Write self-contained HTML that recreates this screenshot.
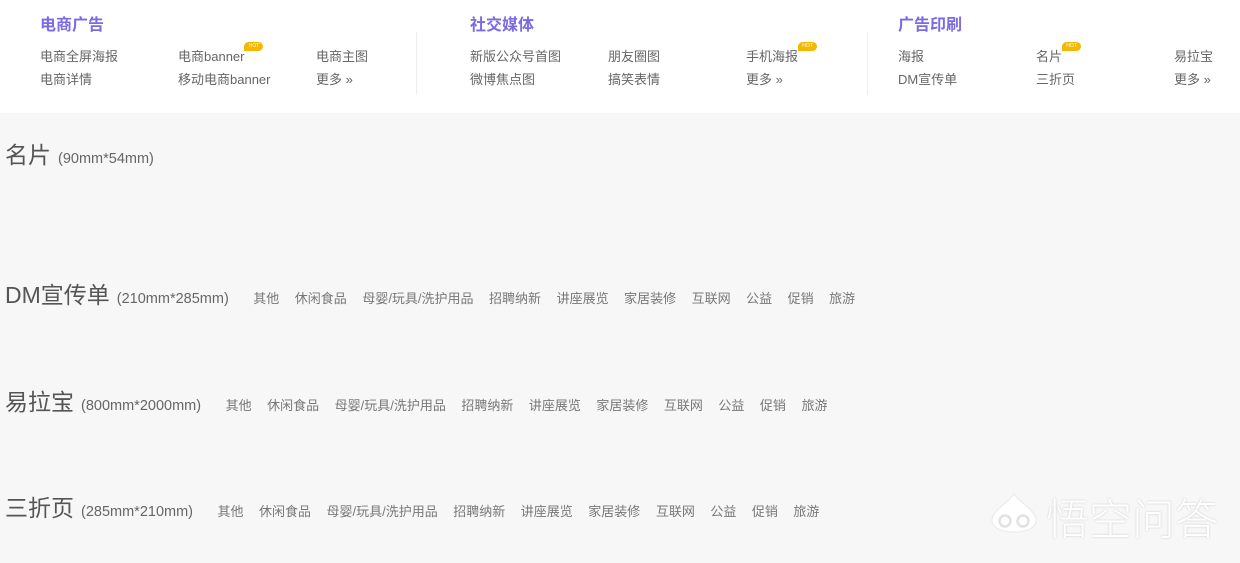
<!DOCTYPE html>
<html><head><meta charset="utf-8"><style>
*{margin:0;padding:0;box-sizing:border-box}
body{width:1240px;height:563px;background:#f7f7f7;font-family:"Liberation Sans","Noto Sans CJK SC",sans-serif;color:#666;position:relative;overflow:hidden}
.hdr{position:absolute;left:0;top:0;width:1240px;height:113px;background:#fff}
.a{position:absolute;white-space:nowrap;font-size:13px;line-height:16px}
.t{position:absolute;font-size:16px;font-weight:bold;color:#7a6be3;line-height:20px}
.div{position:absolute;top:32px;width:1px;height:63px;background:#eee}
.hot{display:inline-block;position:relative;top:-7px;left:0;width:19px;height:9px;border-radius:5px 5px 5px 0;background:#f5b800;color:#fff;font-size:5px;line-height:9px;text-align:center;vertical-align:top}
.row{position:absolute;left:5px;display:flex;align-items:baseline;white-space:nowrap;color:#666}
.row .big{font-size:23px;color:#555}
.row .sz{font-size:14.5px;margin-left:7px;margin-right:9px;color:#666}
.row .tag{font-size:13px;margin-left:15.5px;color:#777}
</style></head><body>
<div class="hdr"></div>
<div class="t" style="left:40px;top:16px">电商广告</div>
<div class="t" style="left:470px;top:16px">社交媒体</div>
<div class="t" style="left:898px;top:16px">广告印刷</div>
<div class="div" style="left:416px"></div>
<div class="div" style="left:867px"></div>

<div class="a" style="left:40px;top:49px">电商全屏海报</div>
<div class="a" style="left:178px;top:49px">电商banner<span class="hot">HOT</span></div>
<div class="a" style="left:316px;top:49px">电商主图</div>
<div class="a" style="left:40px;top:72px">电商详情</div>
<div class="a" style="left:178px;top:72px">移动电商banner</div>
<div class="a" style="left:316px;top:72px">更多 »</div>

<div class="a" style="left:470px;top:49px">新版公众号首图</div>
<div class="a" style="left:608px;top:49px">朋友圈图</div>
<div class="a" style="left:746px;top:49px">手机海报<span class="hot">HOT</span></div>
<div class="a" style="left:470px;top:72px">微博焦点图</div>
<div class="a" style="left:608px;top:72px">搞笑表情</div>
<div class="a" style="left:746px;top:72px">更多 »</div>

<div class="a" style="left:898px;top:49px">海报</div>
<div class="a" style="left:1036px;top:49px">名片<span class="hot">HOT</span></div>
<div class="a" style="left:1174px;top:49px">易拉宝</div>
<div class="a" style="left:898px;top:72px">DM宣传单</div>
<div class="a" style="left:1036px;top:72px">三折页</div>
<div class="a" style="left:1174px;top:72px">更多 »</div>

<div class="row" style="top:136px"><span class="big">名片</span><span class="sz">(90mm*54mm)</span></div>
<div class="row" style="top:276px"><span class="big">DM宣传单</span><span class="sz">(210mm*285mm)</span><span class="tag">其他</span><span class="tag">休闲食品</span><span class="tag">母婴/玩具/洗护用品</span><span class="tag">招聘纳新</span><span class="tag">讲座展览</span><span class="tag">家居装修</span><span class="tag">互联网</span><span class="tag">公益</span><span class="tag">促销</span><span class="tag">旅游</span></div>
<div class="row" style="top:383px"><span class="big">易拉宝</span><span class="sz">(800mm*2000mm)</span><span class="tag">其他</span><span class="tag">休闲食品</span><span class="tag">母婴/玩具/洗护用品</span><span class="tag">招聘纳新</span><span class="tag">讲座展览</span><span class="tag">家居装修</span><span class="tag">互联网</span><span class="tag">公益</span><span class="tag">促销</span><span class="tag">旅游</span></div>
<div class="row" style="top:489px"><span class="big">三折页</span><span class="sz">(285mm*210mm)</span><span class="tag">其他</span><span class="tag">休闲食品</span><span class="tag">母婴/玩具/洗护用品</span><span class="tag">招聘纳新</span><span class="tag">讲座展览</span><span class="tag">家居装修</span><span class="tag">互联网</span><span class="tag">公益</span><span class="tag">促销</span><span class="tag">旅游</span></div>

<svg style="position:absolute;left:986px;top:492px" width="56" height="44" viewBox="0 0 56 44">
<path d="M28 2 C21 12 8 17 6 27 C5 35 14 40 28 40 C42 40 51 35 50 27 C48 17 35 12 28 2Z" fill="#fff" stroke="#e8e8e8"/>
<circle cx="19" cy="29" r="5.5" fill="none" stroke="#e2e2e2" stroke-width="2.5"/>
<circle cx="37" cy="29" r="5.5" fill="none" stroke="#e2e2e2" stroke-width="2.5"/>
</svg>
<div style="position:absolute;left:1046px;top:492px;font-size:43px;line-height:50px;color:#fff;text-shadow:0 0 2px #c8c8c8;font-family:'Noto Sans CJK SC',sans-serif;font-weight:300">悟空问答</div>
</body></html>
